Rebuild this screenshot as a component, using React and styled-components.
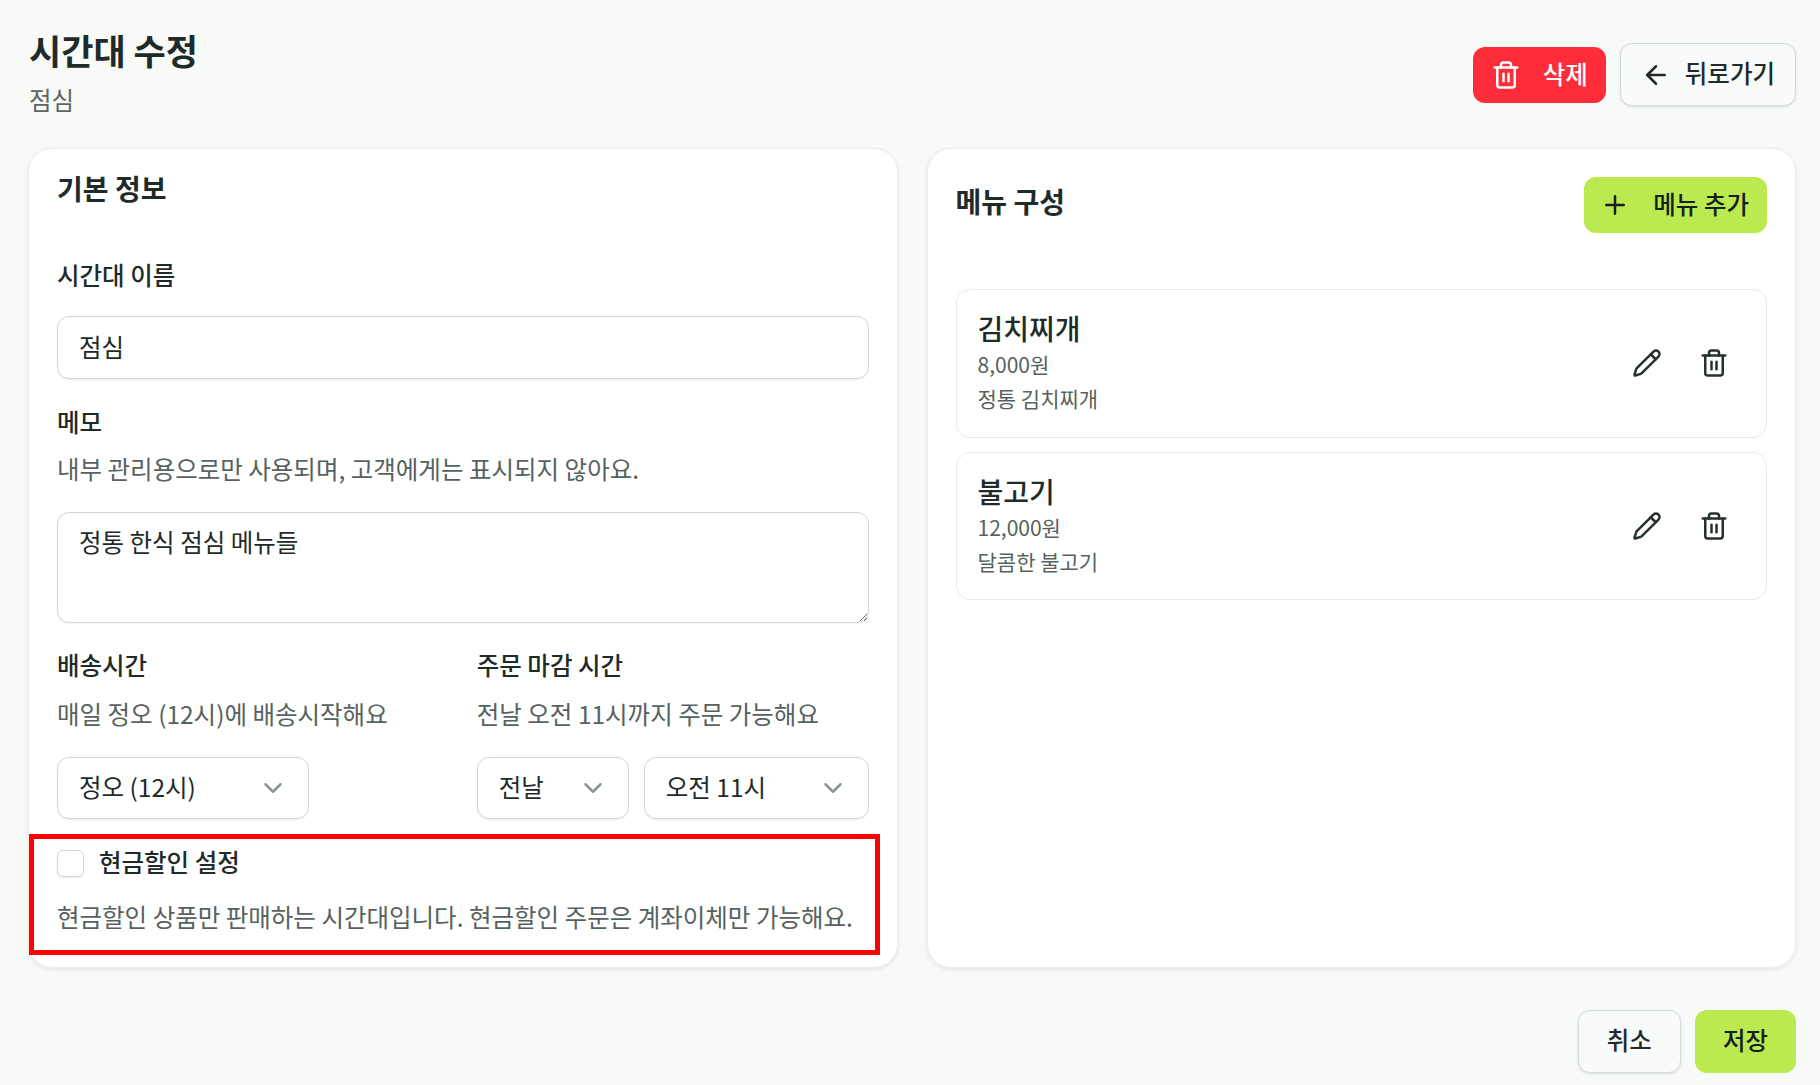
import React from "react";
import styled, { createGlobalStyle } from "styled-components";
import { ArrowLeft, ChevronDown, Pencil, Plus, Trash2 } from "lucide-react";

const GlobalStyle = createGlobalStyle`
  * {
    box-sizing: border-box;
  }
  body {
    margin: 0;
    background: #f8faf8;
    color: #1f2b29;
    font-family: "Noto Sans CJK KR", "Noto Sans", sans-serif;
  }
  button, input, textarea {
    font-family: inherit;
  }
`;

const Page = styled.div`
  width: 1820px;
  height: 1085px;
  padding: 0 24px 0 28px;
  overflow: hidden;
`;

const PageHeader = styled.header`
  display: flex;
  justify-content: space-between;
  height: 148px;
`;

const HeaderText = styled.div`
  padding-top: 26px;
`;

const PageTitle = styled.h1`
  margin: 0 0 0 1px;
  font-size: 35px;
  line-height: 48px;
  font-weight: 700;
`;

const PageSubtitle = styled.p`
  margin: 6px 0 0 1px;
  font-size: 24.5px;
  line-height: 40px;
  color: #5b6765;
`;

const HeaderActions = styled.div`
  display: flex;
  align-items: flex-start;
  gap: 14px;
  height: 63px;
  margin-top: 43px;
`;

const Button = styled.button`
  display: inline-flex;
  align-items: center;
  justify-content: center;
  gap: ${(p) => p.$gap || 0}px;
  height: ${(p) => p.$height || 56}px;
  padding: 0 ${(p) => p.$pad || 18}px 0 ${(p) => p.$padLeft || p.$pad || 18}px;
  border-radius: 12px;
  font-size: 24.5px;
  font-weight: 500;
  border: 1px solid transparent;
  color: #1f2b29;
  background: transparent;
`;

// hangul sits a little above the box centre in the reference
const Raised = styled.span`
  margin-bottom: 4px;
`;

const DangerButton = styled(Button)`
  margin-top: 4px;
  background: #ff2d3a;
  color: #fff;
`;

const PrimaryButton = styled(Button)`
  background: #bae950;
  color: #14201d;
`;

const OutlineButton = styled(Button)`
  background: #f9fbfa;
  border-color: #d5dbda;
  box-shadow: 0 1px 3px rgba(0, 0, 0, 0.12);
`;

const Columns = styled.main`
  display: grid;
  grid-template-columns: 1fr 1fr;
  gap: 29px;
`;

const Card = styled.section`
  background: #fff;
  border: 1px solid #eceeec;
  border-radius: 24px;
  box-shadow: 0 2px 5px rgba(0, 0, 0, 0.08);
  padding: ${(p) => p.$padding};
`;

const CardTitle = styled.h2`
  height: 40px;
  margin: 0;
  font-size: 28px;
  line-height: 36px;
  font-weight: 700;
`;

const MenuTitle = styled(CardTitle)`
  margin-bottom: 4px;
`;

const Label = styled.label`
  display: block;
  height: 36px;
  margin-top: ${(p) => p.$top || 25}px;
  font-size: 24.5px;
  line-height: 34px;
  font-weight: 500;
`;

const Help = styled.p`
  height: 36px;
  margin: ${(p) => p.$top || 12}px 0 0;
  font-size: 24.5px;
  line-height: 34px;
  color: #566260;
  white-space: nowrap;
`;

const TextInput = styled.input`
  display: block;
  width: 100%;
  height: 63px;
  margin-top: 22px;
  padding: 0 21px 3px;
  border: 1px solid #d0d7d6;
  border-radius: 12px;
  font-size: 24.5px;
  color: #1f2b29;
  background: #fff;
  box-shadow: 0 1px 2px rgba(0, 0, 0, 0.06);
  outline: none;
`;

const TextArea = styled.textarea`
  display: block;
  width: 100%;
  height: 111px;
  margin-top: 24px;
  padding: 11px 21px;
  border: 1px solid #d0d7d6;
  border-radius: 12px;
  font-size: 24.5px;
  line-height: 36px;
  color: #1f2b29;
  background: #fff;
  box-shadow: 0 1px 2px rgba(0, 0, 0, 0.06);
  outline: none;
`;

const TimeGrid = styled.div`
  display: grid;
  grid-template-columns: 1fr 1fr;
  gap: 28px;
`;

const SelectRow = styled.div`
  display: flex;
  gap: 15px;
  margin-top: 24px;
`;

const SelectBox = styled.div`
  display: flex;
  align-items: center;
  justify-content: space-between;
  width: ${(p) => (p.$width ? `${p.$width}px` : "auto")};
  flex: ${(p) => (p.$width ? "none" : 1)};
  height: 62px;
  padding: 0 20px 0 21px;
  border: 1px solid #d0d7d6;
  border-radius: 12px;
  font-size: 24.5px;
  background: #fff;
  box-shadow: 0 1px 2px rgba(0, 0, 0, 0.06);

  svg {
    color: #8b9593;
  }
`;

const CashSection = styled.div`
  margin: 15px -11px 0 -28px;
  padding: 11px 10px 14px 23px;
  border: 5px solid #ff0000;
`;

const CheckRow = styled.div`
  display: flex;
  align-items: center;
  gap: 15px;
  height: 27px;
`;

const CheckBox = styled.span`
  width: 27px;
  height: 27px;
  border: 1px solid #d0d7d6;
  border-radius: 6px;
  background: #fff;
  box-shadow: 0 1px 2px rgba(0, 0, 0, 0.08);
`;

const CheckLabel = styled.span`
  margin-bottom: 4px;
  font-size: 24.5px;
  line-height: 36px;
  font-weight: 500;
`;

const MenuHeader = styled.div`
  display: flex;
  align-items: center;
  justify-content: space-between;
`;

const MenuList = styled.div`
  display: flex;
  flex-direction: column;
  gap: 14px;
  margin-top: 56px;
`;

const MenuItem = styled.article`
  display: flex;
  align-items: center;
  justify-content: space-between;
  height: 148.5px;
  padding: 0 25px 0 21px;
  border: 1px solid #e8ebea;
  border-radius: 14px;
`;

const MenuInfo = styled.div`
  padding-bottom: 4px;
`;

const MenuName = styled.h3`
  margin: 0;
  font-size: 28px;
  line-height: 38px;
  font-weight: 500;
`;

const MenuPrice = styled.p`
  margin: 1px 0 0;
  font-size: 21px;
  line-height: 32px;
  color: #566260;
`;

const MenuDesc = styled.p`
  margin: 3px 0 0;
  font-size: 21px;
  line-height: 30px;
  color: #566260;
`;

const MenuActions = styled.div`
  display: flex;
  gap: 13px;
`;

const IconButton = styled.button`
  display: flex;
  align-items: center;
  justify-content: center;
  width: 54px;
  height: 54px;
  padding: 0;
  border: 0;
  background: transparent;
  color: #24312f;
`;

const Footer = styled.footer`
  display: flex;
  justify-content: flex-end;
  gap: 14px;
  margin-top: 42px;
`;

const menus = [
  { name: "김치찌개", price: "8,000원", desc: "정통 김치찌개" },
  { name: "불고기", price: "12,000원", desc: "달콤한 불고기" },
];

const App = () => {
  return (
    <Page>
      <GlobalStyle />
      <PageHeader>
        <HeaderText>
          <PageTitle>시간대 수정</PageTitle>
          <PageSubtitle>점심</PageSubtitle>
        </HeaderText>
        <HeaderActions>
          <DangerButton $gap={22} $pad={17}>
            <Trash2 size={30} strokeWidth={2} />
            <Raised>삭제</Raised>
          </DangerButton>
          <OutlineButton $height={63} $gap={14} $pad={20}>
            <ArrowLeft size={30} strokeWidth={2} />
            <Raised>뒤로가기</Raised>
          </OutlineButton>
        </HeaderActions>
      </PageHeader>

      <Columns>
        <Card $padding="21px 28px 12px 28px">
          <CardTitle>기본 정보</CardTitle>
          <Label $top={48}>시간대 이름</Label>
          <TextInput defaultValue="점심" />
          <Label $top={26}>메모</Label>
          <Help $top={11}>내부 관리용으로만 사용되며, 고객에게는 표시되지 않아요.</Help>
          <TextArea defaultValue="정통 한식 점심 메뉴들" />
          <TimeGrid>
            <div>
              <Label>배송시간</Label>
              <Help $top={13}>매일 정오 (12시)에 배송시작해요</Help>
              <SelectRow>
                <SelectBox $width={252}>
                  <Raised>정오 (12시)</Raised>
                  <ChevronDown size={30} strokeWidth={2} />
                </SelectBox>
              </SelectRow>
            </div>
            <div>
              <Label>주문 마감 시간</Label>
              <Help $top={13}>전날 오전 11시까지 주문 가능해요</Help>
              <SelectRow>
                <SelectBox $width={152}>
                  <Raised>전날</Raised>
                  <ChevronDown size={30} strokeWidth={2} />
                </SelectBox>
                <SelectBox>
                  <Raised>오전 11시</Raised>
                  <ChevronDown size={30} strokeWidth={2} />
                </SelectBox>
              </SelectRow>
            </div>
          </TimeGrid>
          <CashSection>
            <CheckRow>
              <CheckBox />
              <CheckLabel>현금할인 설정</CheckLabel>
            </CheckRow>
            <Help $top={23}>
              현금할인 상품만 판매하는 시간대입니다. 현금할인 주문은 계좌이체만 가능해요.
            </Help>
          </CashSection>
        </Card>

        <Card $padding="28px 28px">
          <MenuHeader>
            <MenuTitle>메뉴 구성</MenuTitle>
            <PrimaryButton $gap={23} $pad={17} $padLeft={15}>
              <Plus size={30} strokeWidth={2} />
              <Raised>메뉴 추가</Raised>
            </PrimaryButton>
          </MenuHeader>
          <MenuList>
            {menus.map((menu) => (
              <MenuItem key={menu.name}>
                <MenuInfo>
                  <MenuName>{menu.name}</MenuName>
                  <MenuPrice>{menu.price}</MenuPrice>
                  <MenuDesc>{menu.desc}</MenuDesc>
                </MenuInfo>
                <MenuActions>
                  <IconButton>
                    <Pencil size={30} strokeWidth={2} />
                  </IconButton>
                  <IconButton>
                    <Trash2 size={30} strokeWidth={2} />
                  </IconButton>
                </MenuActions>
              </MenuItem>
            ))}
          </MenuList>
        </Card>
      </Columns>

      <Footer>
        <OutlineButton $height={63} $pad={28}><Raised>취소</Raised></OutlineButton>
        <PrimaryButton $height={63} $pad={27}><Raised>저장</Raised></PrimaryButton>
      </Footer>
    </Page>
  );
};

export default App;
